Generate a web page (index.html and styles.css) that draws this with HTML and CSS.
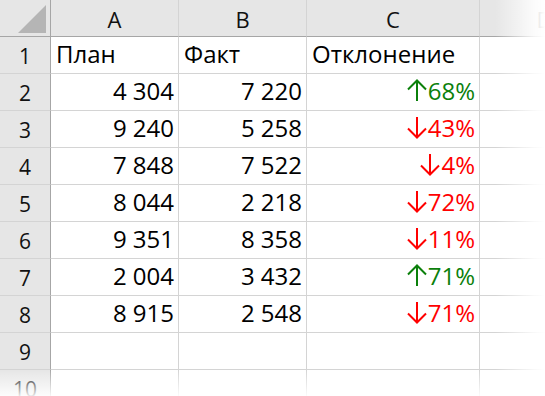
FILE: index.html
```html
<!DOCTYPE html>
<html lang="ru">
<head>
<meta charset="utf-8">
<title>Отклонение</title>
<link rel="stylesheet" href="styles.css">
</head>
<body>
<div class="wrap">
  <div class="sheet">
    <div class="corner"><span class="tri"></span></div>
    <div class="colh">A</div>
    <div class="colh">B</div>
    <div class="colh">C</div>
    <div class="colh last">D</div>

    <div class="rowh">1</div>
    <div class="cell">План</div>
    <div class="cell">Факт</div>
    <div class="cell">Отклонение</div>
    <div class="cell last"></div>

    <div class="rowh">2</div>
    <div class="cell num">4 304</div>
    <div class="cell num">7 220</div>
    <div class="cell num up"><svg class="arr" viewBox="0 0 20 23"><path d="M10 22V1.5M1 10.5L10 1.5L19 10.5"/></svg>68%</div>
    <div class="cell last"></div>

    <div class="rowh">3</div>
    <div class="cell num">9 240</div>
    <div class="cell num">5 258</div>
    <div class="cell num down"><svg class="arr" viewBox="0 0 20 23"><path d="M10 1V21.5M1 12.5L10 21.5L19 12.5"/></svg>43%</div>
    <div class="cell last"></div>

    <div class="rowh">4</div>
    <div class="cell num">7 848</div>
    <div class="cell num">7 522</div>
    <div class="cell num down"><svg class="arr" viewBox="0 0 20 23"><path d="M10 1V21.5M1 12.5L10 21.5L19 12.5"/></svg>4%</div>
    <div class="cell last"></div>

    <div class="rowh">5</div>
    <div class="cell num">8 044</div>
    <div class="cell num">2 218</div>
    <div class="cell num down"><svg class="arr" viewBox="0 0 20 23"><path d="M10 1V21.5M1 12.5L10 21.5L19 12.5"/></svg>72%</div>
    <div class="cell last"></div>

    <div class="rowh">6</div>
    <div class="cell num">9 351</div>
    <div class="cell num">8 358</div>
    <div class="cell num down"><svg class="arr" viewBox="0 0 20 23"><path d="M10 1V21.5M1 12.5L10 21.5L19 12.5"/></svg>11%</div>
    <div class="cell last"></div>

    <div class="rowh">7</div>
    <div class="cell num">2 004</div>
    <div class="cell num">3 432</div>
    <div class="cell num up"><svg class="arr" viewBox="0 0 20 23"><path d="M10 22V1.5M1 10.5L10 1.5L19 10.5"/></svg>71%</div>
    <div class="cell last"></div>

    <div class="rowh">8</div>
    <div class="cell num">8 915</div>
    <div class="cell num">2 548</div>
    <div class="cell num down"><svg class="arr" viewBox="0 0 20 23"><path d="M10 1V21.5M1 12.5L10 21.5L19 12.5"/></svg>71%</div>
    <div class="cell last"></div>

    <div class="rowh">9</div>
    <div class="cell"></div>
    <div class="cell"></div>
    <div class="cell"></div>
    <div class="cell last"></div>

    <div class="rowh">10</div>
    <div class="cell"></div>
    <div class="cell"></div>
    <div class="cell"></div>
    <div class="cell last"></div>
  </div>
  <div class="fade-right"></div>
  <div class="fade-bottom"></div>
</div>
</body>
</html>
```

FILE: styles.css
```css
html, body {
  margin: 0;
  padding: 0;
  background: #fff;
}

.wrap {
  position: relative;
  width: 545px;
  height: 396px;
  overflow: hidden;
}

.sheet {
  display: grid;
  grid-template-columns: 51px 128px 128px 173px 130px;
  grid-auto-rows: 37px;
  font-family: "Open Sans", "Noto Sans", sans-serif;
  color: #000;
}

.sheet > div {
  box-sizing: border-box;
  display: flex;
  align-items: flex-end;
  border-right: 1px solid #d4d4d4;
  border-bottom: 1px solid #d4d4d4;
  white-space: nowrap;
}

.corner {
  position: relative;
  background: #e6e6e6;
  border-right-color: #a6a6a6 !important;
  border-bottom-color: #a6a6a6 !important;
}

.tri {
  position: absolute;
  left: 18px;
  top: 5px;
  width: 28px;
  height: 28px;
  background: #b5b5b5;
  clip-path: polygon(100% 0, 100% 100%, 0 100%);
}

.colh {
  background: #e6e6e6;
  border-bottom-color: #a6a6a6 !important;
  justify-content: center;
  font-size: 22px;
  line-height: 20px;
  padding-bottom: 7px;
  color: #111;
}

.rowh {
  background: #e6e6e6;
  border-right-color: #a6a6a6 !important;
  justify-content: center;
  font-size: 21px;
  line-height: 20px;
  padding-bottom: 7px;
  color: #111;
}

.cell {
  font-size: 24px;
  line-height: 24px;
  padding: 0 4px 7px 5px;
}

.num {
  justify-content: flex-end;
}

.up {
  color: #0b800b;
}

.down {
  color: #ff0000;
}

.arr {
  width: 20px;
  height: 23px;
  margin: 0 1px 1px 0;
  align-self: flex-end;
  fill: none;
  stroke: currentColor;
  stroke-width: 2;
}

.fade-right {
  position: absolute;
  top: 0;
  right: 0;
  width: 50px;
  height: 100%;
  background: linear-gradient(to right, rgba(255,255,255,0) 0%, rgba(255,255,255,0.85) 78%, #fff 100%);
}

.fade-bottom {
  position: absolute;
  left: 0;
  bottom: 0;
  width: 100%;
  height: 26px;
  background: linear-gradient(to bottom, rgba(255,255,255,0) 0%, rgba(255,255,255,0.9) 100%);
}
```
